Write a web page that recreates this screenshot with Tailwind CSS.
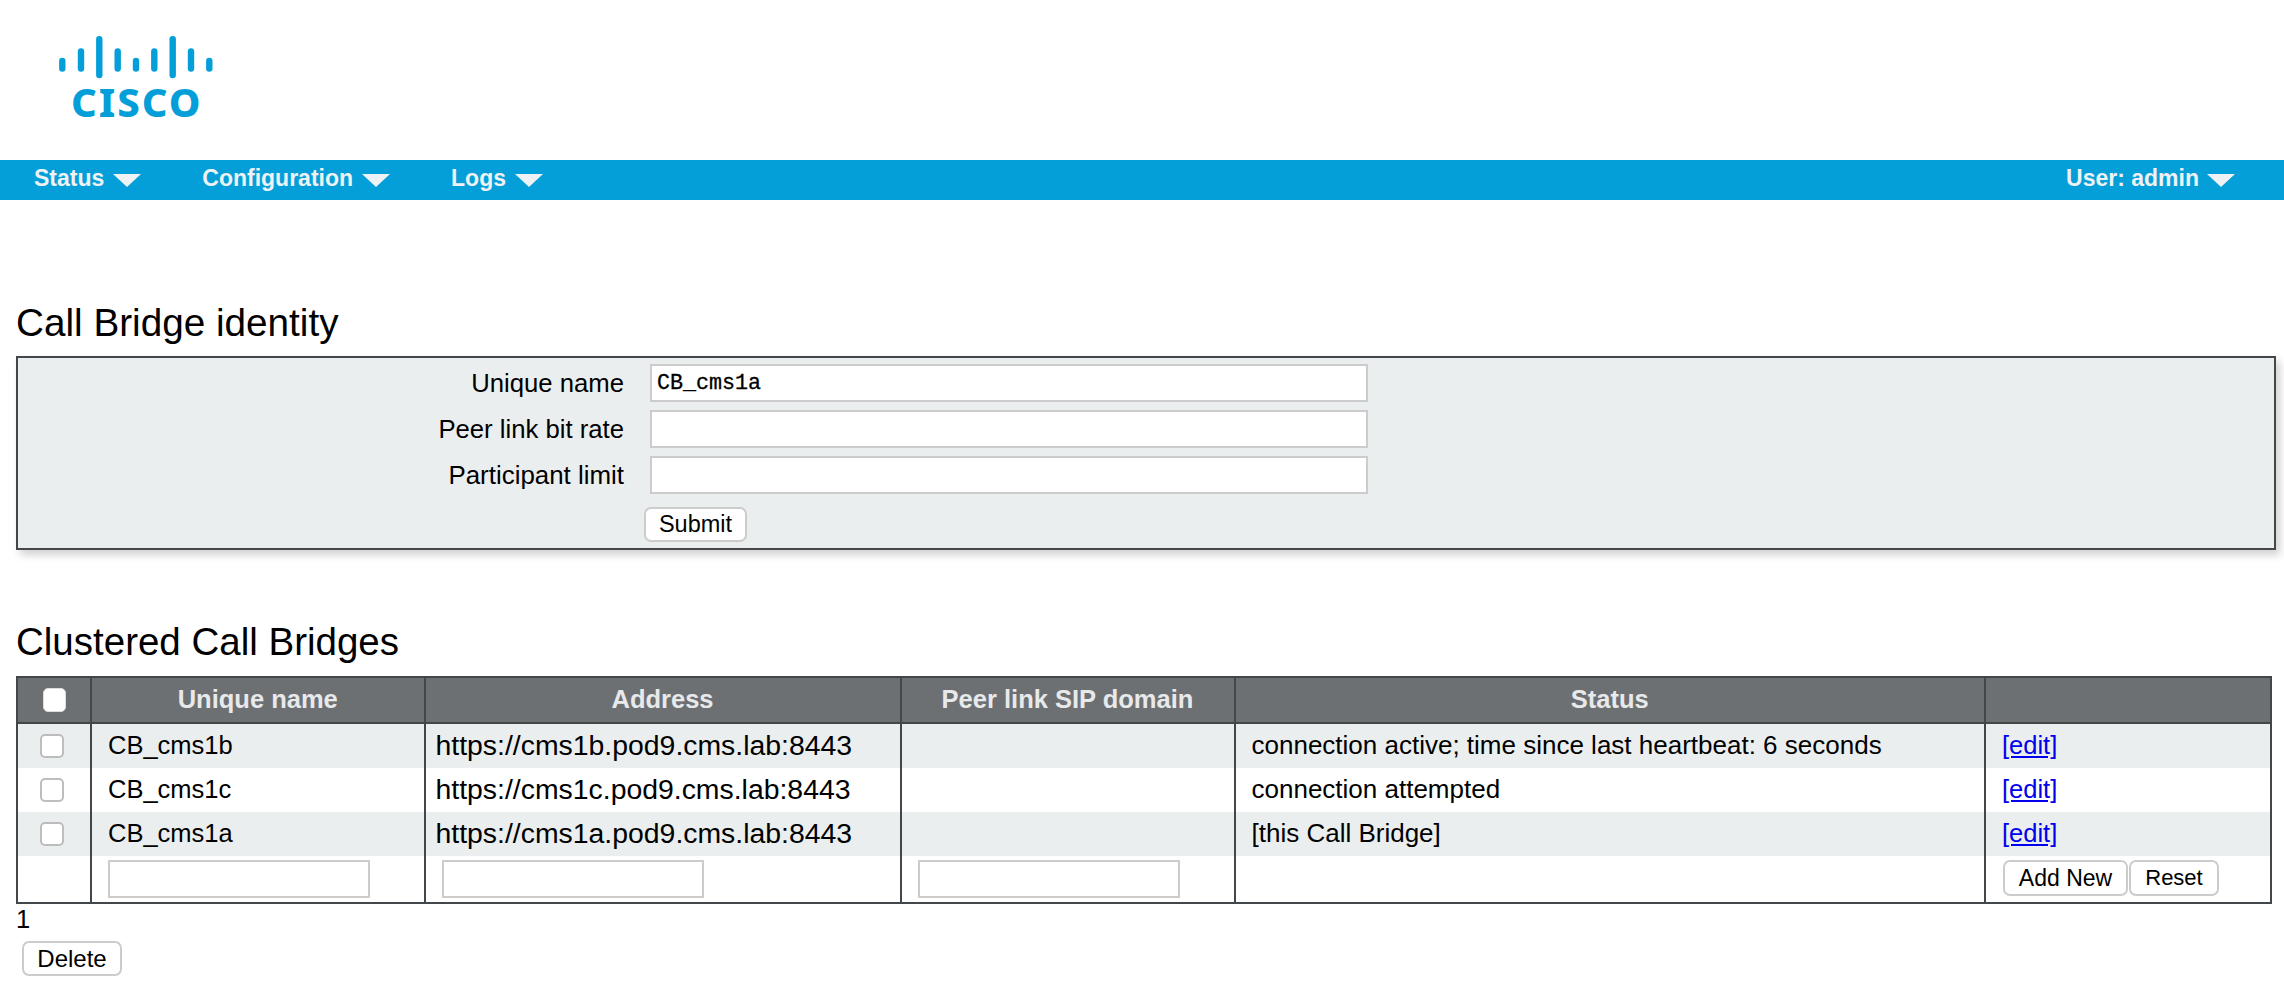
<!DOCTYPE html>
<html lang="en">
<head>
  <meta charset="UTF-8" />
  <title>Call Bridge identity</title>
  <script src="https://cdn.jsdelivr.net/npm/@tailwindcss/browser@4"></script>
</head>
<body class="bg-white font-['Liberation_Sans',Arial,sans-serif] text-[25.5px] text-black overflow-hidden">

  <!-- Logo -->
  <div class="h-[160px] pl-[58px] pt-[36px]">
    <svg width="156" height="43" viewBox="0 0 156 43" class="block">
      <g fill="#049fd9">
        <rect x="1.1" y="21.7" width="6.4" height="14" rx="3.2" />
        <rect x="19.8" y="12.3" width="6.4" height="23.4" rx="3.2" />
        <rect x="38.1" y="0" width="6.4" height="42.3" rx="3.2" />
        <rect x="56.5" y="12.3" width="6.4" height="23.4" rx="3.2" />
        <rect x="74.8" y="21.7" width="6.4" height="14" rx="3.2" />
        <rect x="93.1" y="12.3" width="6.4" height="23.4" rx="3.2" />
        <rect x="111.5" y="0" width="6.4" height="42.3" rx="3.2" />
        <rect x="129.8" y="12.3" width="6.4" height="23.4" rx="3.2" />
        <rect x="148.1" y="21.7" width="6.4" height="14" rx="3.2" />
      </g>
    </svg>
    <div class="ml-[13px] -mt-[1px] font-['Noto_Sans',sans-serif] font-extrabold text-[40px] leading-[48px] tracking-[2px] text-[#049fd9]">CISCO</div>
  </div>

  <!-- Nav bar -->
  <nav class="h-[40px] bg-[#049fd9] flex items-center justify-between pl-[34px] pr-[49px] text-[23px] font-bold text-[#eef2f4]">
    <div class="flex items-center gap-[61px]">
      <div class="flex items-center gap-[9px]"><span class="-mt-[3px]">Status</span><span class="w-0 h-0 border-x-[14px] border-x-transparent border-t-[13px] border-t-[#eef2f4]"></span></div>
      <div class="flex items-center gap-[9px]"><span class="-mt-[3px]">Configuration</span><span class="w-0 h-0 border-x-[14px] border-x-transparent border-t-[13px] border-t-[#eef2f4]"></span></div>
      <div class="flex items-center gap-[9px]"><span class="-mt-[3px]">Logs</span><span class="w-0 h-0 border-x-[14px] border-x-transparent border-t-[13px] border-t-[#eef2f4]"></span></div>
    </div>
    <div class="flex items-center gap-[8px]"><span class="-mt-[3px]">User: admin</span><span class="w-0 h-0 border-x-[14px] border-x-transparent border-t-[13px] border-t-[#eef2f4]"></span></div>
  </nav>

  <main class="pl-[16px]">
    <!-- Call Bridge identity -->
    <h1 class="mt-[89px] text-[38.7px] leading-[67px]">Call Bridge identity</h1>
    <div class="w-[2260px] h-[194px] border-2 border-[#44474a] bg-[#ebeeef] shadow-[4px_5px_8px_rgba(0,0,0,0.18)] grid grid-cols-[606px_1fr] gap-x-[26px] content-start pt-[6px] text-[25.7px]">
      <label class="text-right leading-[38px]">Unique name</label>
      <input value="CB_cms1a" class="w-[718px] h-[38px] bg-white border-2 border-[#ccc] px-[5px] font-['Liberation_Mono',monospace] text-[21.7px] [-webkit-text-stroke:0.3px]" />
      <label class="text-right leading-[38px] mt-[8px]">Peer link bit rate</label>
      <input class="w-[718px] h-[38px] mt-[8px] bg-white border-2 border-[#ccc]" />
      <label class="text-right leading-[38px] mt-[8px] text-[25.9px]">Participant limit</label>
      <input class="w-[718px] h-[38px] mt-[8px] bg-white border-2 border-[#ccc]" />
      <div class="col-start-2 mt-[13px] -ml-[6px]">
        <button class="block h-[35px] w-[103px] bg-white border-2 border-[#ccc] rounded-[7px] text-[23.5px] leading-none">Submit</button>
      </div>
    </div>

    <!-- Clustered Call Bridges -->
    <h1 class="mt-[58px] text-[38.5px] leading-[68px]">Clustered Call Bridges</h1>
    <table class="w-[2256px] table-fixed border-collapse border-2 border-[#44474a] leading-[32px]">
      <colgroup>
        <col class="w-[74px]" /><col class="w-[333.5px]" /><col class="w-[476px]" /><col class="w-[334px]" /><col class="w-[750.5px]" /><col />
      </colgroup>
      <thead>
        <tr class="h-[46px] bg-[#6d7073] text-[#e8e9ea] font-bold">
          <th class="border-2 border-[#44474a]"><span class="block ml-[25px] w-[23px] h-[24px] bg-white border border-[#ddd] rounded-[5px]"></span></th>
          <th class="border-2 border-[#44474a] pb-[3px]">Unique name</th>
          <th class="border-2 border-[#44474a] pb-[3px]">Address</th>
          <th class="border-2 border-[#44474a] pb-[3px]">Peer link SIP domain</th>
          <th class="border-2 border-[#44474a] pb-[3px]">Status</th>
          <th class="border-2 border-[#44474a]"></th>
        </tr>
      </thead>
      <tbody>
        <tr class="h-[45px] bg-[#ebeeef]">
          <td class="border-x-2 border-[#44474a]"><span class="block ml-[22px] w-[24px] h-[24px] bg-white border-2 border-[#bdbdbd] rounded-[5px]"></span></td>
          <td class="border-x-2 border-[#44474a] pl-[16px] pb-[2px]">CB_cms1b</td>
          <td class="border-x-2 border-[#44474a] pl-[10px] pb-[2px] text-[28.4px]">https://cms1b.pod9.cms.lab:8443</td>
          <td class="border-x-2 border-[#44474a]"></td>
          <td class="border-x-2 border-[#44474a] pl-[16px] pb-[2px] text-[26px]">connection active; time since last heartbeat: 6 seconds</td>
          <td class="border-x-2 border-[#44474a] pl-[16px] pb-[2px]"><a href="#" class="text-[#0000ee] underline">[edit]</a></td>
        </tr>
        <tr class="h-[44px] bg-white">
          <td class="border-x-2 border-[#44474a]"><span class="block ml-[22px] w-[24px] h-[24px] bg-white border-2 border-[#bdbdbd] rounded-[5px]"></span></td>
          <td class="border-x-2 border-[#44474a] pl-[16px] pb-[2px]">CB_cms1c</td>
          <td class="border-x-2 border-[#44474a] pl-[10px] pb-[2px] text-[28.4px]">https://cms1c.pod9.cms.lab:8443</td>
          <td class="border-x-2 border-[#44474a]"></td>
          <td class="border-x-2 border-[#44474a] pl-[16px] pb-[2px] text-[26px]">connection attempted</td>
          <td class="border-x-2 border-[#44474a] pl-[16px] pb-[2px]"><a href="#" class="text-[#0000ee] underline">[edit]</a></td>
        </tr>
        <tr class="h-[44px] bg-[#ebeeef]">
          <td class="border-x-2 border-[#44474a]"><span class="block ml-[22px] w-[24px] h-[24px] bg-white border-2 border-[#bdbdbd] rounded-[5px]"></span></td>
          <td class="border-x-2 border-[#44474a] pl-[16px] pb-[2px]">CB_cms1a</td>
          <td class="border-x-2 border-[#44474a] pl-[10px] pb-[2px] text-[28.4px]">https://cms1a.pod9.cms.lab:8443</td>
          <td class="border-x-2 border-[#44474a]"></td>
          <td class="border-x-2 border-[#44474a] pl-[16px] pb-[2px] text-[26px]">[this Call Bridge]</td>
          <td class="border-x-2 border-[#44474a] pl-[16px] pb-[2px]"><a href="#" class="text-[#0000ee] underline">[edit]</a></td>
        </tr>
        <tr class="h-[47px] bg-white">
          <td class="border-x-2 border-[#44474a]"></td>
          <td class="border-x-2 border-[#44474a] pl-[16px]"><input class="block w-[262px] h-[38px] bg-white border-2 border-[#ccc]" /></td>
          <td class="border-x-2 border-[#44474a] pl-[16px]"><input class="block w-[262px] h-[38px] bg-white border-2 border-[#ccc]" /></td>
          <td class="border-x-2 border-[#44474a] pl-[16px]"><input class="block w-[262px] h-[38px] bg-white border-2 border-[#ccc]" /></td>
          <td class="border-x-2 border-[#44474a]"></td>
          <td class="border-x-2 border-[#44474a] pl-[17px] pb-[2px]">
            <div class="flex gap-[1px]">
              <button class="h-[36px] w-[125px] bg-white border-2 border-[#ccc] rounded-[7px] text-[23px] leading-none">Add New</button>
              <button class="h-[36px] w-[90px] bg-white border-2 border-[#ccc] rounded-[7px] text-[22px] leading-none">Reset</button>
            </div>
          </td>
        </tr>
      </tbody>
    </table>
    <div class="leading-[30px]">1</div>
    <button class="block ml-[6px] mt-[7px] h-[35px] w-[100px] bg-white border-2 border-[#ccc] rounded-[7px] text-[24px] leading-none">Delete</button>
  </main>
</body>
</html>
